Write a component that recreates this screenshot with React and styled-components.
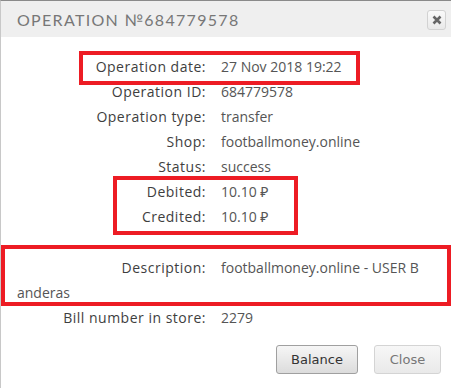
import React from 'react';
import styled, { createGlobalStyle } from 'styled-components';

const GlobalStyle = createGlobalStyle`
  html, body {
    margin: 0;
    padding: 0;
    background: #fff;
  }
`;

const Dialog = styled.div`
  position: relative;
  width: 450px;
  height: 387px;
  border-top: 1px solid #8a8a8a;
  border-left: 1px solid #c8c8c8;
  background: #fff;
  font-family: 'Open Sans', 'Noto Sans', sans-serif;
  color: #555;
  overflow: hidden;
`;

const Header = styled.div`
  display: flex;
  align-items: center;
  justify-content: space-between;
  height: 36px;
  padding: 0 5px 0 16px;
  background: #efefef;
`;

const Title = styled.h1`
  margin: 0;
  font-family: Lato, sans-serif;
  font-weight: 400;
  font-size: 16px;
  letter-spacing: 1.3px;
  color: #777;
  text-transform: uppercase;
`;

const CloseIcon = styled.button`
  display: flex;
  align-items: center;
  justify-content: center;
  width: 19px;
  height: 20px;
  padding: 0;
  border: 1px solid #d2d2d2;
  border-radius: 3px;
  background: linear-gradient(#fafafa, #e9e9e9);
  margin-top: 2px;
`;

const Body = styled.div`
  padding: 17px 0 0 16px;
  font-size: 14px;
  line-height: 25px;
`;

const Row = styled.div`
  display: flex;
`;

const Label = styled.span`
  flex: none;
  width: 189px;
  padding-right: 15px;
  text-align: right;
  letter-spacing: 0.5px;
  color: #3e3e3e;
`;

const Value = styled.span``;

const WrapRow = styled.div`
  margin-top: 26px;
  padding-right: 26px;
  word-break: break-all;
`;

const InlineLabel = styled(Label)`
  display: inline-block;
`;

const Footer = styled.div`
  display: flex;
  justify-content: flex-end;
  gap: 16px;
  padding: 15px 10px 0 0;
`;

const Button = styled.button`
  height: 29px;
  padding: 0 14px;
  border: 1px solid ${(p) => (p.$muted ? '#d4d4d4' : '#a0a0a0')};
  border-radius: 3px;
  background: ${(p) =>
    p.$muted ? 'linear-gradient(#f7f7f7, #e9e9e9)' : 'linear-gradient(#f6f6f6, #dcdcdc)'};
  color: ${(p) => (p.$muted ? '#777' : '#333')};
  font-family: 'DejaVu Sans', Verdana, sans-serif;
  font-size: 13px;
  min-width: ${(p) => (p.$muted ? '67px' : '82px')};
`;

const Mark = styled.div`
  position: absolute;
  left: ${(p) => p.$x}px;
  top: ${(p) => p.$y}px;
  width: ${(p) => p.$w}px;
  height: ${(p) => p.$h}px;
  border: 4px solid #ed1c24;
  box-sizing: border-box;
  pointer-events: none;
`;

const rows = [
  ['Operation date:', '27 Nov 2018 19:22'],
  ['Operation ID:', '684779578'],
  ['Operation type:', 'transfer'],
  ['Shop:', 'footballmoney.online'],
  ['Status:', 'success'],
  ['Debited:', '10.10 ₽'],
  ['Credited:', '10.10 ₽'],
];

export default function App() {
  return (
    <>
      <GlobalStyle />
      <Dialog>
        <Header>
          <Title>Operation №684779578</Title>
          <CloseIcon aria-label="close">
            <svg width="10" height="10" viewBox="0 0 10 10">
              <path d="M1.5 1.5L8.5 8.5M8.5 1.5L1.5 8.5" stroke="#666" strokeWidth="2.6" />
            </svg>
          </CloseIcon>
        </Header>
        <Body>
          {rows.map(([label, value]) => (
            <Row key={label}>
              <Label>{label}</Label>
              <Value>{value}</Value>
            </Row>
          ))}
          <WrapRow>
            <InlineLabel>Description:</InlineLabel>
            footballmoney.online - USER Banderas
          </WrapRow>
          <Row>
            <Label>Bill number in store:</Label>
            <Value>2279</Value>
          </Row>
        </Body>
        <Footer>
          <Button>Balance</Button>
          <Button $muted>Close</Button>
        </Footer>
        <Mark $x={78} $y={50} $w={281} $h={34} />
        <Mark $x={112} $y={175} $w={185} $h={59} />
        <Mark $x={0} $y={244} $w={450} $h={61} />
      </Dialog>
    </>
  );
}
